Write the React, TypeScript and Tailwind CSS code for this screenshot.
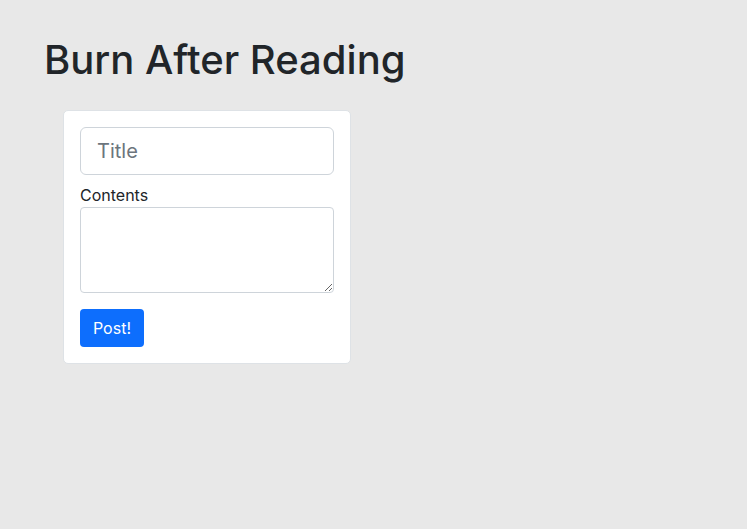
export default function App() {
  return (
    <div className="min-h-screen w-full bg-[#e8e8e8] font-['Inter',sans-serif] text-[#212529]">
      <div className="pl-[44px] pt-[36px]">
        <h1 className="text-[40px] leading-[1.2] font-medium">Burn After Reading</h1>
        <div className="ml-[19px] mt-[26px] w-[288px] rounded-[5px] border border-[#dee2e6] bg-white p-4">
          <input
            type="text"
            placeholder="Title"
            className="block w-full h-[48px] rounded-[6px] border border-[#ced4da] bg-white px-4 text-[20px] leading-[1.5] outline-none placeholder:text-[#6c757d]"
          />
          <label className="mt-2 block text-[16px] leading-6">Contents</label>
          <textarea
            rows={3}
            className="block w-full h-[86px] rounded-[4px] border border-[#ced4da] bg-white px-3 py-1.5 text-[16px] leading-6 outline-none"
          />
          <button className="mt-4 h-[38px] w-[64px] rounded-[4px] bg-[#0d6efd] text-[16px] text-white">
            Post!
          </button>
        </div>
      </div>
    </div>
  );
}
